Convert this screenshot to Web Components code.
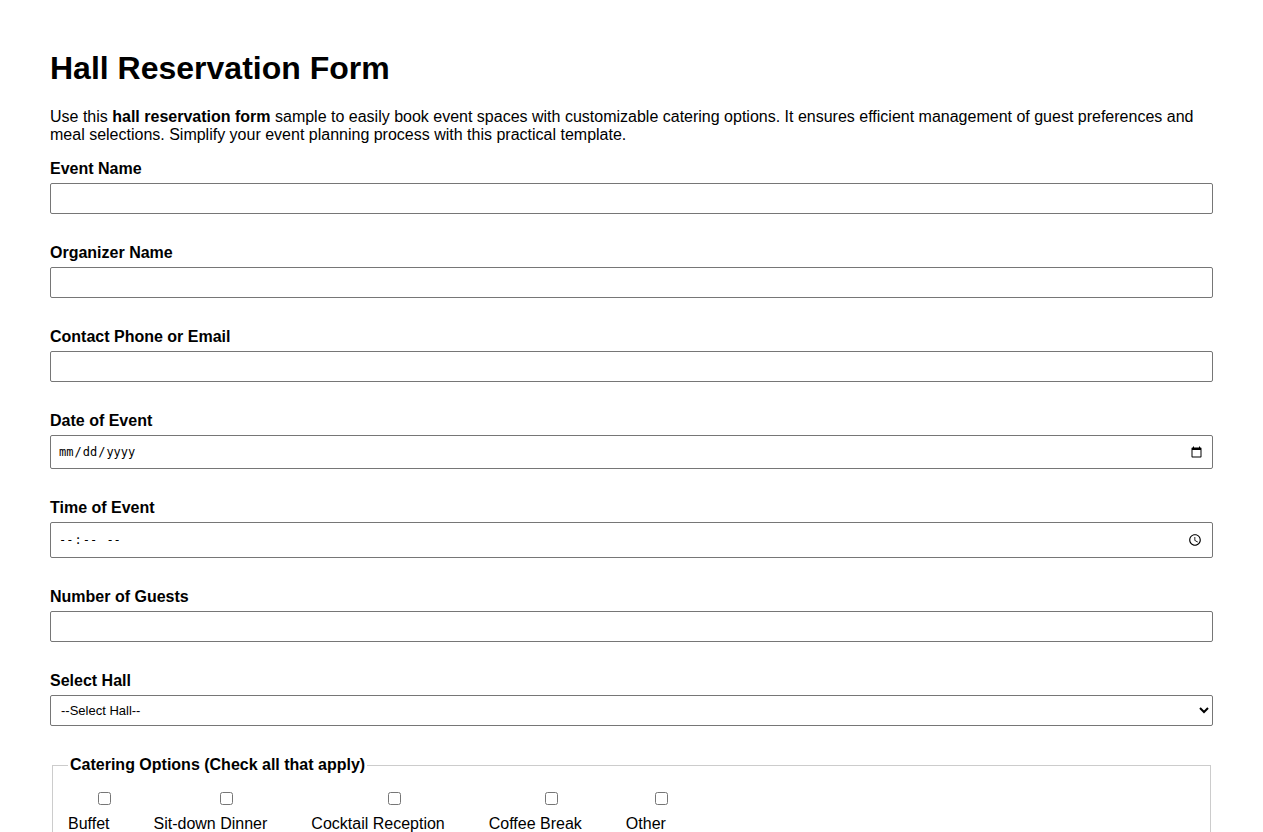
<!DOCTYPE html>
<html lang="en">
<head>
<meta charset="utf-8">
<meta name="viewport" content="width=device-width, initial-scale=1">
<title>Hall Reservation Form</title>
<style>
  body {
    margin: 0;
    background: #fff;
    color: #000;
    font-family: Arial, "Liberation Sans", sans-serif;
    font-size: 16px;
    line-height: 18px;
  }
</style>
</head>
<body>
<reservation-form>
  <h1 slot="title">Hall Reservation Form</h1>
  <p slot="intro">Use this <strong>hall reservation form</strong> sample to easily book event spaces with customizable catering options. It ensures efficient management of guest preferences and meal selections. Simplify your event planning process with this practical template.</p>
  <form-field label="Event Name" type="text"></form-field>
  <form-field label="Organizer Name" type="text"></form-field>
  <form-field label="Contact Phone or Email" type="text"></form-field>
  <form-field label="Date of Event" type="date"></form-field>
  <form-field label="Time of Event" type="time"></form-field>
  <form-field label="Number of Guests" type="number"></form-field>
  <select-field label="Select Hall" placeholder="--Select Hall--"></select-field>
  <option-group label="Catering Options (Check all that apply)">
    <check-option>Buffet</check-option>
    <check-option>Sit-down Dinner</check-option>
    <check-option>Cocktail Reception</check-option>
    <check-option>Coffee Break</check-option>
    <check-option>Other</check-option>
  </option-group>
</reservation-form>

<script>
const fieldStyles = `
  :host {
    display: block;
  }
  .field {
    display: grid;
    gap: 5px;
  }
  label {
    font-weight: bold;
  }
  input, select {
    box-sizing: border-box;
    width: 100%;
    height: 31px;
    margin: 0;
    padding: 7px;
    border: 1px solid #767676;
    border-radius: 2px;
    background: #fff;
    color: #000;
    font-family: Arial, "Liberation Sans", sans-serif;
    font-size: 13px;
  }
  input[type="date"], input[type="time"] {
    font-family: "DejaVu Sans Mono", monospace;
    font-size: 12px;
  }
  input::-webkit-calendar-picker-indicator {
    font-size: 13px;
  }
  input[type="date"] {
    height: 34px;
  }
  input[type="time"] {
    height: 36px;
  }
`;

class ReservationForm extends HTMLElement {
  constructor() {
    super();
    this.attachShadow({ mode: "open" });
  }

  connectedCallback() {
    this.shadowRoot.innerHTML = `
      <style>
        :host {
          display: block;
          padding: 50px;
        }
        ::slotted(h1) {
          margin: 0 0 21px;
          font-size: 32px;
          line-height: 37px;
        }
        ::slotted(p) {
          margin: 0 0 16px;
        }
        form {
          display: grid;
          gap: 30px;
        }
      </style>
      <slot name="title"></slot>
      <slot name="intro"></slot>
      <form><slot></slot></form>
    `;
  }
}

class FormField extends HTMLElement {
  constructor() {
    super();
    this.attachShadow({ mode: "open" });
  }

  connectedCallback() {
    this.shadowRoot.innerHTML = `
      <style>${fieldStyles}</style>
      <div class="field">
        <label for="control">${this.getAttribute("label")}</label>
        <input id="control" type="${this.getAttribute("type")}">
      </div>
    `;
  }
}

class SelectField extends HTMLElement {
  constructor() {
    super();
    this.attachShadow({ mode: "open" });
  }

  connectedCallback() {
    this.shadowRoot.innerHTML = `
      <style>
        ${fieldStyles}
        select {
          padding: 0 6px;
        }
      </style>
      <div class="field">
        <label for="control">${this.getAttribute("label")}</label>
        <select id="control">
          <option value="">${this.getAttribute("placeholder")}</option>
        </select>
      </div>
    `;
  }
}

class OptionGroup extends HTMLElement {
  constructor() {
    super();
    this.attachShadow({ mode: "open" });
  }

  connectedCallback() {
    this.shadowRoot.innerHTML = `
      <style>
        :host {
          display: block;
        }
        fieldset {
          margin: 0 2px;
          padding: 18px 15px;
          border: 1px solid #ccc;
        }
        legend {
          padding: 0 2px;
          font-weight: bold;
        }
        .options {
          display: flex;
          flex-wrap: wrap;
          gap: 18px 44px;
        }
      </style>
      <fieldset>
        <legend>${this.getAttribute("label")}</legend>
        <div class="options"><slot></slot></div>
      </fieldset>
    `;
  }
}

class CheckOption extends HTMLElement {
  constructor() {
    super();
    this.attachShadow({ mode: "open" });
  }

  connectedCallback() {
    this.shadowRoot.innerHTML = `
      <style>
        :host {
          display: block;
        }
        label {
          display: grid;
          gap: 10px;
        }
        /* the box sits right of the middle of its text */
        input {
          width: 13px;
          height: 13px;
          margin: 0 -16px 0 16px;
          justify-self: center;
        }
      </style>
      <label>
        <input type="checkbox">
        <span><slot></slot></span>
      </label>
    `;
  }
}

customElements.define("reservation-form", ReservationForm);
customElements.define("form-field", FormField);
customElements.define("select-field", SelectField);
customElements.define("option-group", OptionGroup);
customElements.define("check-option", CheckOption);
</script>
</body>
</html>
